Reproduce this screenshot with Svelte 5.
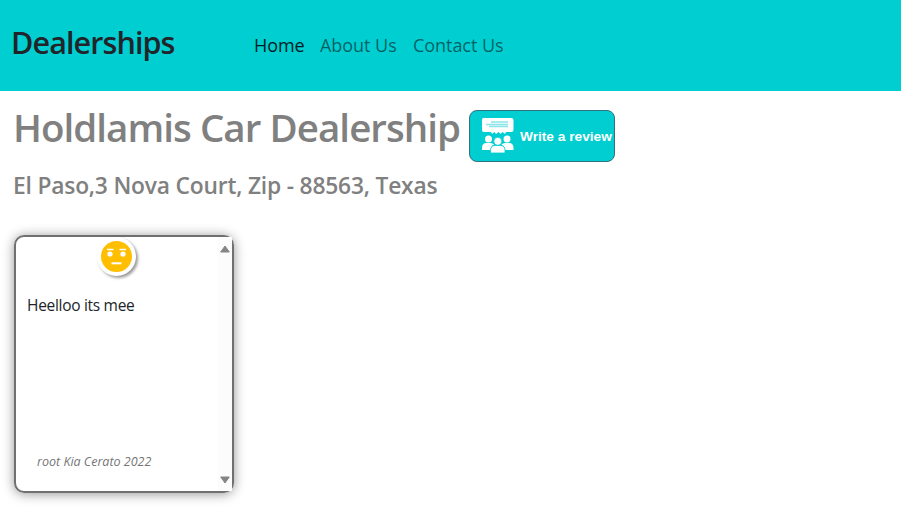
<script>
  const links = [
    { label: 'Home', active: true, width: 50 },
    { label: 'About Us', active: false, width: 77 },
    { label: 'Contact Us', active: false, width: 90 }
  ];
  const dealer = { name: 'Holdlamis Car Dealership', address: 'El Paso,3 Nova Court, Zip - 88563, Texas' };
  const reviews = [{ text: 'Heelloo its mee', author: 'root Kia Cerato 2022' }];
</script>

<div class="page">
  <nav>
    <span class="brand">Dealerships</span>
    <div class="links">
      {#each links as link}
        <span class="link" class:active={link.active} style:width="{link.width}px">{link.label}</span>
      {/each}
    </div>
  </nav>

  <header>
    <div class="title">
      <h1>{dealer.name}</h1>
      <button>
        <svg width="34" height="37" viewBox="0 0 34 37">
          <path fill="#fff" d="M2.500 1H30.500Q32.500 1 32.500 3V13Q32.500 15 30.500 15H25L24 17L21.500 15L19.500 17L17.500 15L15 17L13.500 15L11 17L10 15H2.500Q1 15 1 13V3Q1 1 2.500 1Z" />
          <path stroke="#8ce5e8" stroke-width="1.300" d="M10 5H27M5 7.500H27M8 9.500H27" />
          <g fill="#fff">
            <circle cx="7.500" cy="22" r="3.500" />
            <path d="M1 33V31Q1 26 5.500 26H9.500Q11.500 26 13 27.500Q9.500 29 9.500 33Z" />
            <circle cx="26" cy="22" r="3.500" />
            <path d="M32.500 33V31Q32.500 26 28 26H24Q22 26 20.500 27.500Q24 29 24 33Z" />
          </g>
          <g fill="#fff" stroke="#00ced1" stroke-width=".8">
            <path d="M9.500 36V33.500Q9.500 28.500 14 28.500H19.500Q24 28.500 24 33.500V36Z" />
            <circle cx="16.800" cy="24.300" r="4" />
          </g>
        </svg>
        <span>Write a review</span>
      </button>
    </div>
    <h2>{dealer.address}</h2>
  </header>

  <main>
    {#each reviews as review}
      <article>
        <div class="content">
          <div class="face">
            <svg width="31" height="31" viewBox="0 0 31 31">
              <circle cx="15.500" cy="15.500" r="15.500" fill="#ffbf00" />
              <path stroke="#fff" stroke-width="1.700" d="M6 8.500H12.500M18.500 8.500H25" />
              <path stroke="#fff" stroke-width="2" d="M10.500 22.300H20.500" />
              <circle cx="9" cy="13" r="2.600" fill="#fff" />
              <circle cx="22" cy="13" r="2.600" fill="#fff" />
            </svg>
          </div>
          <p>{review.text}</p>
          <footer>{review.author}</footer>
        </div>
        <div class="scroll">
          <svg width="10" height="8" viewBox="0 0 10 8"><path fill="#858585" stroke="#858585" stroke-linejoin="round" d="M5 1L9.300 7H.7Z" /></svg>
          <svg width="10" height="8" viewBox="0 0 10 8"><path fill="#858585" stroke="#858585" stroke-linejoin="round" d="M5 7L.7 1H9.300Z" /></svg>
        </div>
      </article>
    {/each}
  </main>
</div>

<style>
  .page {
    height: 517px;
    overflow: hidden;
    background: #fff;
    color: #212529;
    font-family: "Open Sans", "Noto Sans", sans-serif;
    white-space: nowrap;
  }
  nav {
    display: flex;
    height: 91px;
    background: #00ced1;
  }
  .brand {
    width: 243px;
    padding-left: 11px;
    box-sizing: border-box;
    font-size: 30.5px;
    font-weight: 600;
    line-height: 84px;
    letter-spacing: -0.9px;
  }
  .links {
    display: flex;
    gap: 16px;
    padding-left: 11px;
    font-size: 18px;
    line-height: 91px;
    letter-spacing: -0.05px;
    color: rgba(0, 0, 0, 0.55);
  }
  .active { color: #001c1c; }
  header { padding: 16px 14px 0 13px; }
  .title { display: flex; height: 64px; }
  h1, h2 { margin: 0; font-weight: 600; color: #808080; }
  h1 {
    width: 456px;
    flex: none;
    font-size: 38.5px;
    line-height: 41px;
    letter-spacing: -0.95px;
  }
  h2 { padding-top: 1px; font-size: 22.8px; line-height: 28px; letter-spacing: -0.2px; }
  button {
    display: flex;
    flex: none;
    align-items: center;
    width: 146px;
    height: 52px;
    box-sizing: border-box;
    margin: 3px 0 0;
    padding: 0 0 0 11px;
    gap: 5px;
    border: 1px solid #32727f;
    border-radius: 8px;
    background: #00ced1;
    color: #fff;
    font: bold 13.7px "Liberation Sans", Arial, sans-serif;
    white-space: nowrap;
  }
  button svg { flex: none; margin-top: -2px; }
  main { padding: 35px 14px; }
  article {
    display: flex;
    width: 220px;
    height: 258px;
    box-sizing: border-box;
    border: 2px solid #707070;
    border-radius: 10px;
    box-shadow: 0 1px 12px rgba(0, 0, 0, 0.42);
  }
  .content { flex: 1; display: flex; flex-direction: column; }
  .face {
    display: flex;
    width: 31px;
    margin: 0 auto;
    padding: 4px;
    border-radius: 50%;
    background: #fff;
    box-shadow: 2px 2px 3px rgba(0, 0, 0, 0.4);
    transform: translateX(-1px);
  }
  p { margin: 17px 0 0 11px; font-size: 15.5px; line-height: 24px; letter-spacing: -0.3px; }
  footer {
    margin: auto 0 19px 21px;
    font-size: 12.5px;
    line-height: 20px;
    font-style: italic;
    color: #757575;
  }
  .scroll {
    display: flex;
    flex-direction: column;
    justify-content: space-between;
    align-items: center;
    width: 14px;
    padding: 8px 0 7px;
    background: #fcfcfc;
  }
</style>
